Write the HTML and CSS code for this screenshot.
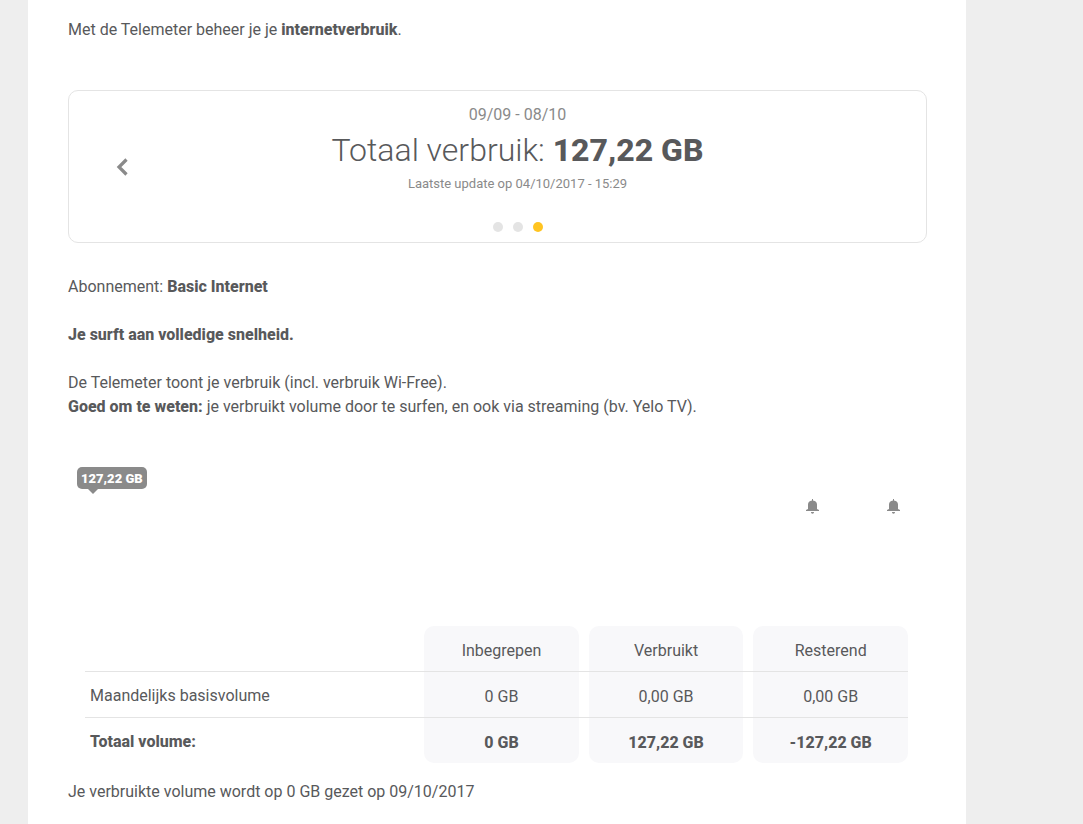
FILE: index.html
```
<!DOCTYPE html>
<html lang="nl">
<head>
<meta charset="UTF-8" />
<meta name="viewport" content="width=device-width, initial-scale=1" />
<title>Telemeter</title>
<link rel="stylesheet" href="styles.css">
</head>
<body>

<main class="page">
  <p class="intro">Met de Telemeter beheer je je <strong>internetverbruik</strong>.</p>

  <section class="period">
    <button class="prev" type="button" aria-label="Vorige periode">
      <svg width="12" height="18" viewBox="0 0 12 18"><path d="M10.500 1.500 L3 9 L10.500 16.500" fill="none" stroke="currentColor" stroke-width="3.2" /></svg>
    </button>
    <p class="dates">09/09 - 08/10</p>
    <h1>Totaal verbruik: <strong>127,22 GB</strong></h1>
    <p class="updated">Laatste update op 04/10/2017 - 15:29</p>
    <div class="dots">
      <button type="button" aria-label="Periode 1"></button>
      <button type="button" aria-label="Periode 2"></button>
      <button type="button" class="active" aria-label="Periode 3"></button>
    </div>
  </section>

  <div class="info">
    <p>Abonnement: <strong>Basic Internet</strong></p>
    <p><strong>Je surft aan volledige snelheid.</strong></p>
    <p>De Telemeter toont je verbruik (incl. verbruik Wi-Free).<br>
    <strong>Goed om te weten:</strong> je verbruikt volume door te surfen, en ook via streaming (bv. Yelo TV).</p>
  </div>

  <div class="meter">
    <span class="usage">127,22 GB</span>
    <div class="alerts">
      <svg class="bell" width="13" height="15" viewBox="0 0 13 15"><path d="M6 0h1v1.500C9.500 1.800 11 3.200 11 5.500V10l2 1v1H0v-1l2-1V5.500C2 3.200 3.500 1.800 6 1.500zM5 13h3c0 1-.6 1.700-1.500 1.700S5 14 5 13z" /></svg>
      <svg class="bell" width="13" height="15" viewBox="0 0 13 15"><path d="M6 0h1v1.500C9.500 1.800 11 3.200 11 5.500V10l2 1v1H0v-1l2-1V5.500C2 3.200 3.500 1.800 6 1.500zM5 13h3c0 1-.6 1.700-1.500 1.700S5 14 5 13z" /></svg>
    </div>
  </div>

  <table class="volumes">
    <thead>
      <tr>
        <td></td>
        <th scope="col"><span>Inbegrepen</span></th>
        <th scope="col"><span>Verbruikt</span></th>
        <th scope="col"><span>Resterend</span></th>
      </tr>
    </thead>
    <tbody>
      <tr>
        <th scope="row">Maandelijks basisvolume</th>
        <td><span>0 GB</span></td>
        <td><span>0,00 GB</span></td>
        <td><span>0,00 GB</span></td>
      </tr>
      <tr class="total">
        <th scope="row">Totaal volume:</th>
        <td><span>0 GB</span></td>
        <td><span>127,22 GB</span></td>
        <td><span>-127,22 GB</span></td>
      </tr>
    </tbody>
  </table>

  <p>Je verbruikte volume wordt op 0 GB gezet op 09/10/2017</p>
</main>

</body>
</html>
```
FILE: styles.css
```
* {
  margin: 0;
  padding: 0;
  box-sizing: border-box;
}

body {
  background: #eee;
  color: #58595b;
  font-family: Roboto, "Liberation Sans", sans-serif;
  font-size: 16px;
  font-weight: 400;
  line-height: 24px;
}

strong {
  font-weight: 800;
}

button {
  border: 0;
  background: none;
  cursor: pointer;
}

.page {
  min-height: 100vh;
  margin: 0 117px 0 28px;
  padding: 18px 39px 20px 40px;
  background: #fff;
}

/* --- Period slider --- */
.period {
  position: relative;
  margin: 48px 0 32px;
  padding: 12px 0 10px 40px;
  border: 1px solid #e4e4e4;
  border-radius: 10px;
  text-align: center;
}

.dates,
.updated {
  color: #8a8a8a;
}

.period h1 {
  margin: 3px 0 4px;
  font-size: 32px;
  font-weight: 300;
  line-height: 40px;
}

.updated {
  font-size: 13px;
  line-height: 20px;
}

.prev {
  position: absolute;
  top: 50%;
  left: 47px;
  height: 18px;
  margin-top: -9px;
  color: #8a8a8a;
}

.prev svg {
  display: block;
}

.dots {
  display: flex;
  justify-content: center;
  gap: 10px;
  margin-top: 28px;
}

.dots button {
  width: 10px;
  height: 10px;
  border-radius: 50%;
  background: #e4e4e4;
}

.dots .active {
  background: #ffc421;
}

.info p {
  margin-bottom: 24px;
}

/* --- Usage meter --- */
.meter {
  height: 159px;
  margin-top: 48px;
  padding: 0 27px 0 9px;
}

.usage {
  position: relative;
  display: block;
  width: fit-content;
  height: 22px;
  padding: 0 4px;
  border-radius: 5px;
  background: #8a8a8a;
  color: #fff;
  font-size: 13px;
  font-weight: 900;
  line-height: 24px;
}

.usage::after {
  content: "";
  position: absolute;
  top: 100%;
  left: 11px;
  border: 5px solid transparent;
  border-top-color: #8a8a8a;
  border-bottom: 0;
}

.alerts {
  display: flex;
  justify-content: flex-end;
  gap: 68px;
  margin-top: 10px;
}

.bell {
  fill: #8a8a8a;
}

/* --- Volume table --- */
.volumes {
  width: calc(100% - 36px);
  margin: 0 0 17px 17px;
  border-spacing: 0;
  table-layout: fixed;
}

.volumes th,
.volumes td {
  width: 20%;
  padding-left: 10px;
  border-bottom: 1px solid #e4e4e4;
  font-weight: 400;
  text-align: center;
}

.volumes tr > :first-child {
  width: 40%;
  padding-top: 2px;
  padding-left: 5px;
  text-align: left;
}

.volumes span {
  display: block;
  height: 45px;
  background: #f8f8fa;
  line-height: 50px;
}

.volumes thead span {
  border-radius: 10px 10px 0 0;
}

.volumes .total th,
.volumes .total td {
  border-bottom: 0;
  font-weight: 800;
}

.volumes .total span {
  border-radius: 0 0 10px 10px;
}
```
